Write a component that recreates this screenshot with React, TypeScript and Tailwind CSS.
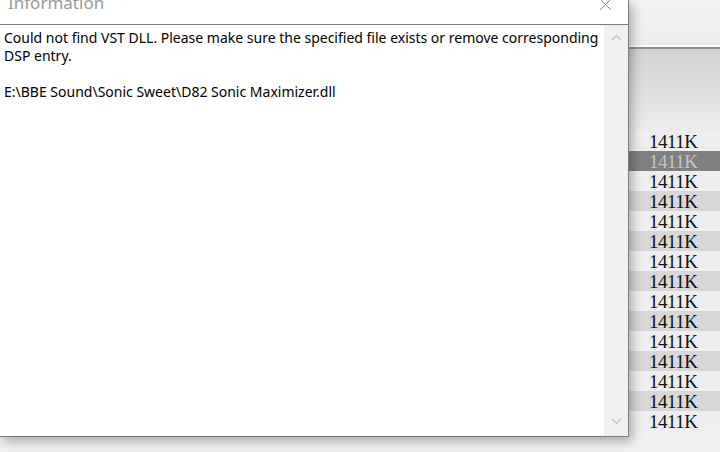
const rows = Array.from({ length: 15 }, (_, i) => i);

function rowClass(i: number) {
  if (i === 1) return "bg-[#808080] text-[#c4c4c4]";
  if (i % 2 === 1) return "bg-[#d8d8d8] text-[#111]";
  return "bg-[#eeeeee] text-[#111]";
}

export default function App() {
  return (
    <div className="relative h-[452px] w-[720px] overflow-hidden bg-[#f0f0f0]">
      {/* host window behind the dialog */}
      <div className="flex h-full flex-col">
        <div className="h-[45px] bg-gradient-to-b from-[#f2f2f2] to-[#ececec]" />
        <div className="h-[2px] bg-[#fbfbfb]" />
        <div className="h-[2px] bg-[#8e8e8e]" />
        <div className="h-[82px] bg-gradient-to-b from-[#d2d2d2] to-[#ececec]" />
        <div>
          {rows.map((i) => (
            <div
              key={i}
              className={`h-5 pl-[649px] pt-px font-['Liberation_Serif',serif] text-[19px] leading-5 tracking-[-0.5px] ${rowClass(i)}`}
            >
              1411K
            </div>
          ))}
        </div>
        <div className="flex-1 bg-[#f0f0f0]" />
      </div>

      {/* Information dialog */}
      <div className="absolute left-0 top-0 flex h-[437px] w-[629px] flex-col border-r border-b border-[#7c7c7c] bg-white shadow-[3px_4px_10px_rgba(0,0,0,0.3)]">
        <div className="relative h-[25px] shrink-0 overflow-hidden border-b border-[#7a7a7a]">
          <span className="absolute left-[8px] top-[-8px] font-['Noto_Sans',sans-serif] text-[17px] leading-[22px] text-[#9a9a9a]">
            Information
          </span>
          <svg className="absolute left-[599px] top-[-2px]" width="13" height="13" viewBox="0 0 13 13">
            <path d="M1 1L12 12M12 1L1 12" stroke="#8a8a8a" strokeWidth="1" fill="none" />
          </svg>
        </div>

        <div className="flex min-h-0 flex-1">
          <div className="flex-1 whitespace-nowrap pl-1 pt-1 font-['Noto_Sans',sans-serif] text-[14px] leading-[18px] text-black">
            <p>Could not find VST DLL. Please make sure the specified file exists or remove corresponding</p>
            <p>DSP entry.</p>
            <p>&nbsp;</p>
            <p>E:\BBE Sound\Sonic Sweet\D82 Sonic Maximizer.dll</p>
          </div>
          <div className="flex w-6 flex-col items-center justify-between bg-[#f0f0f0] pt-[9px] pb-[11px]">
            <svg width="11" height="7" viewBox="0 0 11 7">
              <path d="M1 6L5.5 1.5L10 6" stroke="#bdbdbd" strokeWidth="1.2" fill="none" />
            </svg>
            <svg width="11" height="7" viewBox="0 0 11 7">
              <path d="M1 1L5.5 5.5L10 1" stroke="#bdbdbd" strokeWidth="1.2" fill="none" />
            </svg>
          </div>
        </div>
      </div>
    </div>
  );
}
